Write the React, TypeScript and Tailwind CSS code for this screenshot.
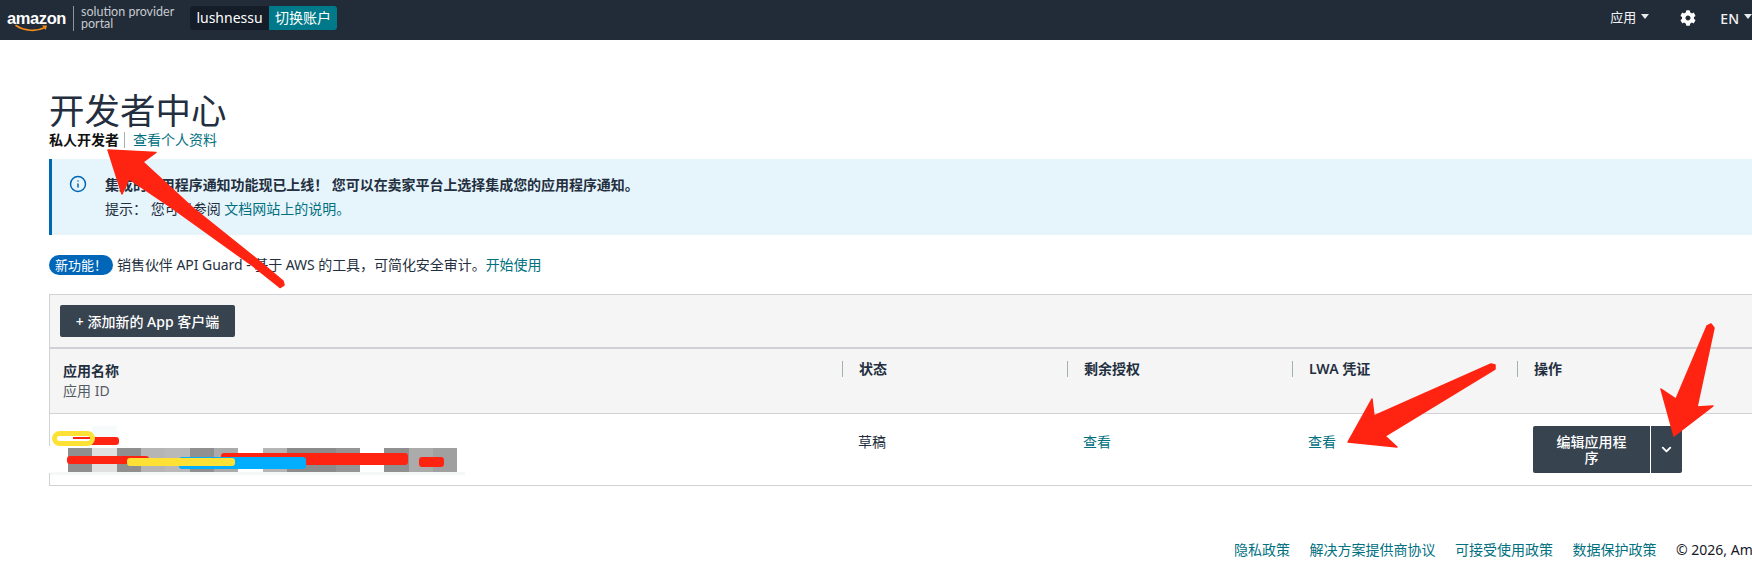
import { ChevronDown, Info } from 'lucide-react'
import { FaCog } from 'react-icons/fa'

const mosaic = [
  'w-[24px] bg-[#8f8f8f]',
  'w-[25px] bg-[#e0e0e0]',
  'w-[24px] bg-[#8f8f8f]',
  'w-[24px] bg-[#b5b5b5]',
  'w-[25px] bg-[#b9b9b9]',
  'w-[24px] bg-[#909090]',
  'w-[24px] bg-[#ababab]',
  'w-[25px] bg-white',
  'w-[24px] bg-[#b5b5b5]',
  'w-[24px] bg-[#8c8c8c]',
  'w-[25px] bg-[#8c8c8c]',
  'w-[24px] bg-[#959595]',
  'w-[24px] bg-white',
  'w-[25px] bg-[#909090]',
  'w-[24px] bg-[#ababab]',
  'w-[24px] bg-[#a0a0a0]',
]

function Caret() {
  return <span className="ml-[5px] mb-[3px] w-0 h-0 border-x-[4.5px] border-x-transparent border-t-[5px] border-t-[#e8eaec]" />
}

function HeadCell({ children }: { children: string }) {
  return (
    <div className="pt-[12px]">
      <div className="h-[16px] border-l border-[#a5b0b5] pl-[16px] text-[14px] leading-[16px] font-semibold text-[#232f3e]">
        {children}
      </div>
    </div>
  )
}

export default function App() {
  return (
    <div
      className="relative w-[1752px] h-[584px] overflow-hidden bg-white text-[14px] text-[#232f3e]"
      style={{ fontFamily: '"Noto Sans", "Noto Sans CJK SC", sans-serif' }}
    >
      {/* Top bar */}
      <header className="h-10 bg-[#222c39] flex items-center pl-[7px] pb-[4px] text-white">
        <div className="relative w-[59px] h-[30px]">
          <span
            className="absolute left-0 top-[5px] text-[16.5px] leading-[20px] font-bold tracking-[-0.4px]"
            style={{ fontFamily: '"Liberation Sans", sans-serif' }}
          >
            amazon
          </span>
          <svg className="absolute left-[8px] top-[21px]" width="34" height="9" viewBox="0 0 34 9" fill="none">
            <path d="M1 1.5C9 7 21 8 30 3.5" stroke="#f08c1a" strokeWidth="1.6" strokeLinecap="round" />
            <path d="M27 1.5L32 1.5L30.8 6Z" fill="#f08c1a" />
          </svg>
        </div>
        <div className="ml-[7px] h-[25px] w-px bg-[#8b939c]" />
        <div
          className="ml-[7px] w-[100px] whitespace-nowrap text-[12.5px] leading-[12px] text-[#c6c9cd]"
          style={{ fontFamily: 'Lato, sans-serif' }}
        >
          solution provider
          <br />
          portal
        </div>
        <div className="ml-[9px] flex h-[24px] items-stretch text-[14px] leading-[24px]">
          <div className="w-[79px] rounded-l-[3px] bg-[#151d29] text-center">lushnessu</div>
          <div className="w-[68px] rounded-r-[3px] bg-[#007a8a] text-center">切换账户</div>
        </div>

        <div className="ml-auto flex items-center text-[13px] text-[#f2f3f4]">
          <span>应用</span>
          <Caret />
          <FaCog className="ml-[31px] text-white" size={16} />
          <span className="ml-[24px] text-[14px] font-medium">EN</span>
          <Caret />
        </div>
      </header>

      <main className="pl-[49px]">
        {/* Title */}
        <h1 className="pt-[49px] text-[35.5px] leading-[42px] font-normal whitespace-nowrap">开发者中心</h1>
        <div className="flex h-[18px] items-center text-[14px] leading-[18px]">
          <span className="font-bold text-[#111]">私人开发者</span>
          <span className="ml-[5px] h-[16px] w-px bg-[#a5b0b5]" />
          <a href="#" className="ml-[8px] text-[#01707f]">
            查看个人资料
          </a>
        </div>

        {/* Notice */}
        <div className="mt-[10px] flex h-[76px] border-l-[3px] border-[#0067b3] bg-[#e6f4fc] pl-[17px] pt-[14px]">
          <Info size={18} className="mt-[2px] text-[#0067b3]" />
          <div className="ml-[18px] text-[14px] leading-[24px] text-[#232f3e]">
            <div className="font-semibold tracking-[-0.05px]">集成的应用程序通知功能现已上线！ 您可以在卖家平台上选择集成您的应用程序通知。</div>
            <div>
              提示： 您可以参阅{' '}
              <a href="#" className="text-[#01707f]">
                文档网站上的说明。
              </a>
            </div>
          </div>
        </div>

        {/* New feature */}
        <div className="mt-[20px] flex h-[20px] items-center leading-[20px]">
          <span className="flex h-[20px] w-[64px] items-center justify-center rounded-full bg-[#0067b8] text-[13px] text-white">
            新功能！
          </span>
          <span className="ml-[4px] tracking-[-0.05px]">销售伙伴 API Guard - 基于 AWS 的工具，可简化安全审计。</span>
          <a href="#" className="text-[#01707f]">
            开始使用
          </a>
        </div>

        {/* App table */}
        <section className="mt-[19px] h-[192px] w-[1800px] border-y border-l border-[#d0d2d5]">
          <div className="h-[52px] bg-[#f5f5f5] pl-[10px] pt-[10px]">
            <button className="h-[32px] w-[175px] rounded-[2px] bg-[#37434f] text-[14px] font-medium text-white">
              + 添加新的 App 客户端
            </button>
          </div>
          <div className="grid h-[66px] grid-cols-[792px_225px_225px_225px_1fr] border-t-2 border-[#cfd1d5] bg-[#f5f5f5]">
            <div className="pl-[13px] pt-[12px] leading-[20px]">
              <div className="font-semibold">应用名称</div>
              <div className="text-[#545b64]">应用 ID</div>
            </div>
            <HeadCell>状态</HeadCell>
            <HeadCell>剩余授权</HeadCell>
            <HeadCell>LWA 凭证</HeadCell>
            <HeadCell>操作</HeadCell>
          </div>
          <div className="grid h-[72px] grid-cols-[792px_225px_225px_225px_1fr] border-t border-[#d0d2d5]">
            <div className="relative pl-[18px] pt-[34px]">
              <div className="flex h-[24px]">
                {mosaic.map((cell, i) => (
                  <div key={i} className={cell} />
                ))}
              </div>
              <div className="absolute -left-px top-[32px] h-[27px] w-[19px] bg-white" />
              <div className="absolute left-0 top-[58px] h-[3px] w-[415px] bg-[#f6f7f7]" />
              <div className="absolute left-[42px] top-[12px] h-[12px] w-[25px] bg-[#f8fbfb]" />
              {/* scribbles over the redacted id */}
              <div className="absolute left-[23px] top-[23px] h-[8px] w-[46px] rounded-[3px] bg-[#ff2412]" />
              <div className="absolute left-[2px] top-[17px] h-[15px] w-[43px] rounded-full border-[5px] border-[#ffe135] bg-white" />
              <div className="absolute left-[23px] top-[23px] h-[2px] w-[17px] bg-[#ff2412]" />
              <div className="absolute left-[17px] top-[42px] h-[8px] w-[82px] rounded-[3px] bg-[#ff2412]" />
              <div className="absolute left-[171px] top-[39px] h-[12px] w-[187px] rounded-[3px] bg-[#ff2412]" />
              <div className="absolute left-[129px] top-[43px] h-[12px] w-[127px] rounded-[3px] bg-[#00aeff]" />
              <div className="absolute left-[77px] top-[44px] h-[8px] w-[108px] rounded-[3px] bg-[#ffe135]" />
              <div className="absolute left-[369px] top-[43px] h-[10px] w-[25px] rounded-[3px] bg-[#ff2412]" />
            </div>
            <div className="pl-[16px] pt-[18px] leading-[20px]">草稿</div>
            <div className="pl-[16px] pt-[18px] leading-[20px]">
              <a href="#" className="text-[#01707f]">查看</a>
            </div>
            <div className="pl-[16px] pt-[18px] leading-[20px]">
              <a href="#" className="text-[#01707f]">查看</a>
            </div>
            <div className="flex pl-[16px] pt-[12px]">
              <button className="h-[47px] w-[117px] rounded-l-[2px] bg-[#37434f] px-[20px] text-[14px] leading-[16px] font-medium text-white">
                编辑应用程序
              </button>
              <button className="ml-px flex h-[47px] w-[31px] items-center justify-center rounded-r-[2px] bg-[#37434f] text-white">
                <ChevronDown size={15} strokeWidth={3} />
              </button>
            </div>
          </div>
        </section>
      </main>

      {/* Footer */}
      <footer className="mt-[54px] flex w-max gap-[19.5px] pl-[1234px] leading-[20px] whitespace-nowrap">
        <a href="#" className="text-[#01707f]">隐私政策</a>
        <a href="#" className="text-[#01707f]">解决方案提供商协议</a>
        <a href="#" className="text-[#01707f]">可接受使用政策</a>
        <a href="#" className="text-[#01707f]">数据保护政策</a>
        <span className="text-[#16191f]">© 2026, Amazon.com, Inc. or its affiliates</span>
      </footer>

      {/* Red annotation arrows drawn over the page */}
      <svg className="pointer-events-none absolute inset-0" width="1752" height="584" viewBox="0 0 1752 584">
        <g fill="#ff2412" stroke="#ff2412" strokeWidth="1.5" strokeLinejoin="round">
          <polygon points="108,150 156,152.5 143,162 193,208 264,265 283,281 284,285 280,287.5 253,266 172,208 129,179 122,194" />
          <polygon points="1348,442 1372,399 1374,416 1491,364 1495,365 1495,369 1385,436 1397,447" />
          <polygon points="1674,436 1661,389 1676,399 1707,326 1711,324 1714,328 1697,407 1713,406" />
        </g>
      </svg>
    </div>
  )
}
